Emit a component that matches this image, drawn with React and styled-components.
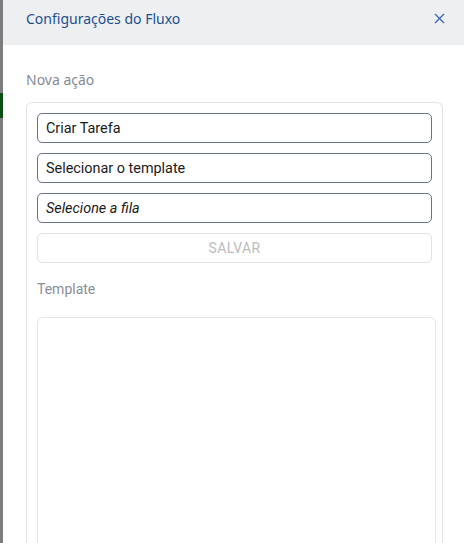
import React from 'react';
import styled, { createGlobalStyle } from 'styled-components';

const GlobalStyle = createGlobalStyle`
	html, body{
		margin: 0;
		padding: 0;
		height: 100%;
		background: #ffffff;
	}
	#root{
		height: 100%;
	}
`;

const Page = styled.div`
	display: flex;
	height: 543px;
	overflow: hidden;
`;

const Backdrop = styled.div`
	width: 3px;
	flex-shrink: 0;
	background: linear-gradient(
		to bottom,
		#7d7d7d 0px, #7d7d7d 93px,
		#0b4d12 93px, #0b4d12 118px,
		#7d7d7d 118px
	);
`;

const Drawer = styled.div`
	flex: 1;
	display: flex;
	flex-direction: column;
	background: #ffffff;
	min-width: 0;
`;

const Header = styled.div`
	height: 45px;
	flex-shrink: 0;
	display: flex;
	align-items: center;
	justify-content: space-between;
	padding: 0 19px 0 23px;
	background: #eeeff1;
`;

const Title = styled.h1`
	margin: 0;
	font-family: "Noto Sans", "Open Sans", sans-serif;
	font-size: 14px;
	font-weight: 400;
	color: #1d4f8f;
	margin-top: -8px;
`;

const CloseButton = styled.button`
	border: 0;
	background: transparent;
	padding: 0;
	width: 12px;
	height: 12px;
	display: flex;
	align-items: center;
	justify-content: center;
	color: #3c6cb6;
	margin-top: -8px;
	cursor: pointer;
`;

const Body = styled.div`
	flex: 1;
	display: flex;
	flex-direction: column;
	padding: 25px 21px 0 23px;
	min-height: 0;
`;

const SectionLabel = styled.div`
	font-family: "Noto Sans", "Open Sans", sans-serif;
	font-size: 14px;
	color: #858b95;
	line-height: 20px;
	margin-bottom: 12px;
`;

const Card = styled.div`
	flex: 1;
	display: flex;
	flex-direction: column;
	gap: 10px;
	padding: 10px 6px 0 10px;
	border: 1px solid #e3e3e3;
	border-bottom: 0;
	border-radius: 6px 6px 0 0;
	min-height: 0;
`;

const Field = styled.div`
	height: 30px;
	margin-right: 4px;
	box-sizing: border-box;
	display: flex;
	align-items: center;
	padding: 0 8px;
	border: 1px solid #6b7384;
	border-radius: 5px;
	font-family: Roboto, "Liberation Sans", sans-serif;
	font-size: 14.4px;
	color: #1b1b1b;
	font-style: ${p => (p.$placeholder ? 'italic' : 'normal')};
`;

const SaveButton = styled.button`
	height: 30px;
	margin-right: 4px;
	border: 1px solid #e2e2e2;
	border-radius: 5px;
	background: #ffffff;
	font-family: Roboto, "Liberation Sans", sans-serif;
	font-size: 14px;
	letter-spacing: 0.3px;
	color: #bdbdbd;
	padding: 0;
`;

const TemplateLabel = styled.div`
	font-family: Roboto, "Liberation Sans", sans-serif;
	font-size: 14px;
	color: #8a8f98;
	line-height: 20px;
	margin-top: 6px;
	margin-bottom: 8px;
`;

const TemplateBox = styled.div`
	flex: 1;
	border: 1px solid #e6e6e6;
	border-bottom: 0;
	border-radius: 6px 6px 0 0;
`;

const App = () => {
	return (
		<>
			<GlobalStyle />
			<Page>
				<Backdrop />
				<Drawer>
					<Header>
						<Title>Configurações do Fluxo</Title>
						<CloseButton aria-label="Fechar">
							<svg width="11" height="11" viewBox="0 0 11 11">
								<path d="M1 1 L10 10 M10 1 L1 10" stroke="currentColor" strokeWidth="1.4" fill="none" />
							</svg>
						</CloseButton>
					</Header>
					<Body>
						<SectionLabel>Nova ação</SectionLabel>
						<Card>
							<Field>Criar Tarefa</Field>
							<Field>Selecionar o template</Field>
							<Field $placeholder>Selecione a fila</Field>
							<SaveButton disabled>SALVAR</SaveButton>
							<TemplateLabel>Template</TemplateLabel>
							<TemplateBox />
						</Card>
					</Body>
				</Drawer>
			</Page>
		</>
	);
}

export default App;
